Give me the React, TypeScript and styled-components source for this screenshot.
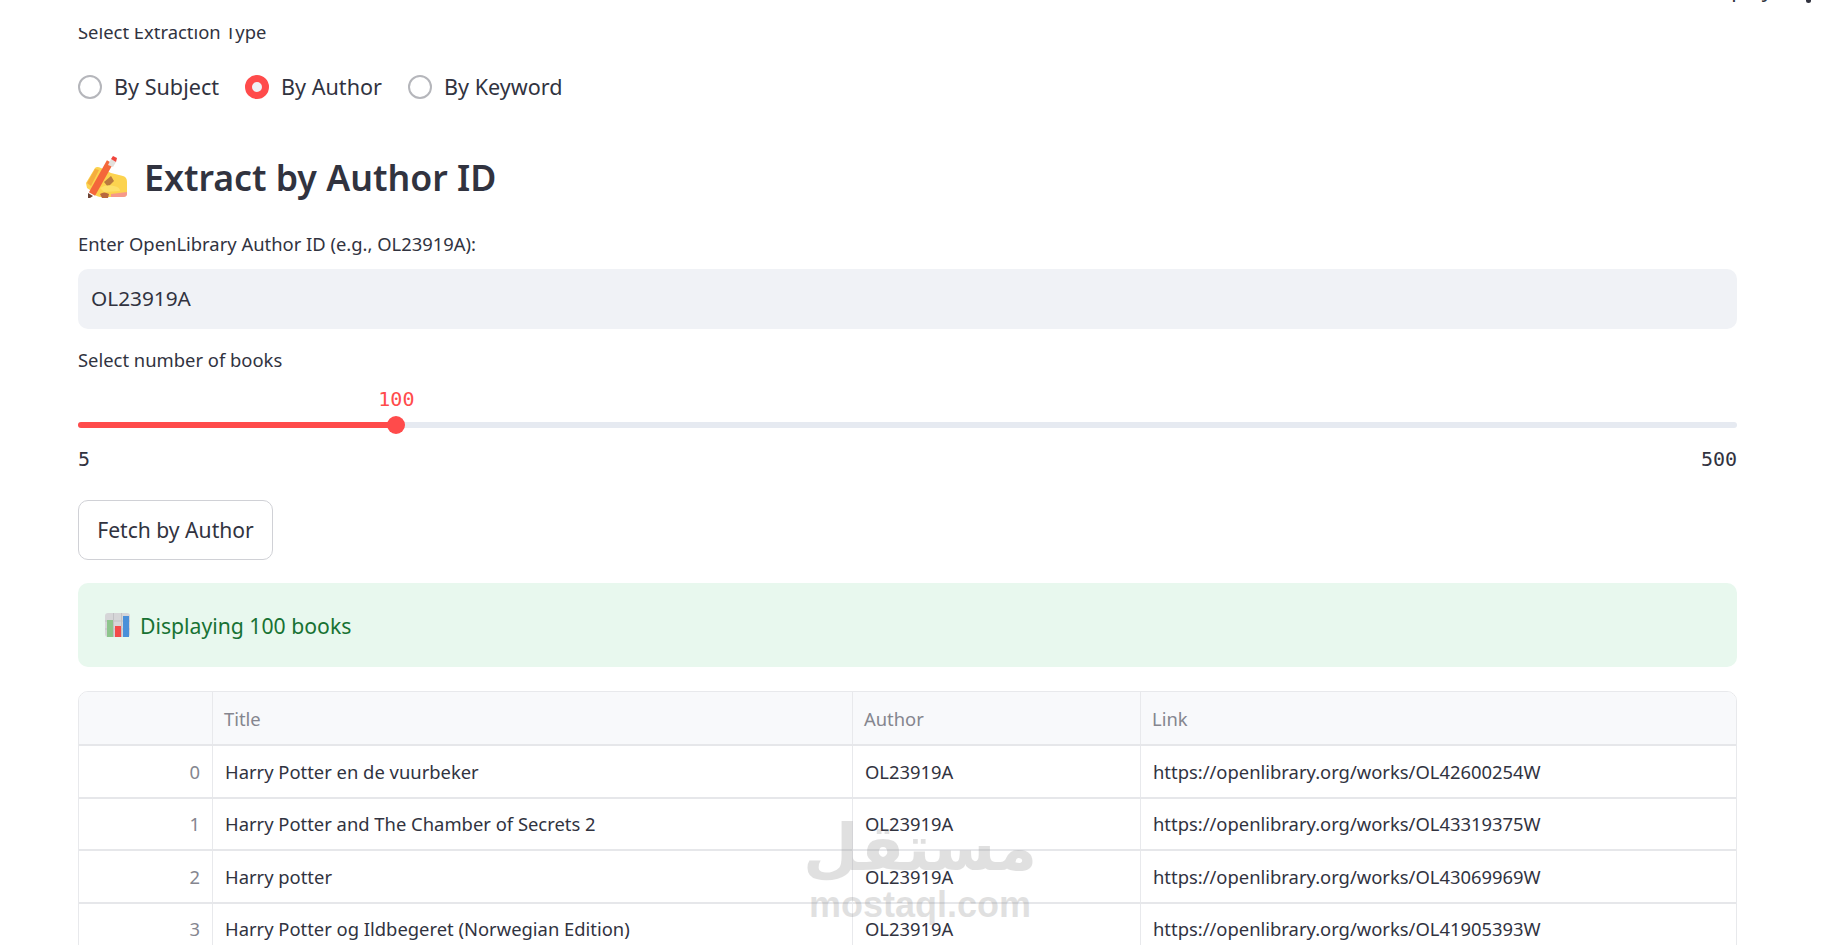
import React from 'react'
import styled, { createGlobalStyle } from 'styled-components'

const SANS = `"Noto Sans", "Open Sans", sans-serif`
const MONO = `"DejaVu Sans Mono", "Liberation Mono", monospace`

const books = [
    { title: 'Harry Potter en de vuurbeker', link: 'https://openlibrary.org/works/OL42600254W' },
    { title: 'Harry Potter and The Chamber of Secrets 2', link: 'https://openlibrary.org/works/OL43319375W' },
    { title: 'Harry potter', link: 'https://openlibrary.org/works/OL43069969W' },
    { title: 'Harry Potter og Ildbegeret (Norwegian Edition)', link: 'https://openlibrary.org/works/OL41905393W' },
]

const extractionTypes = ['By Subject', 'By Author', 'By Keyword']
const sliderPercent = ((100 - 5) / (500 - 5)) * 100

const WritingHand = () => (
    <svg width="44" height="42" viewBox="0 0 44 42">
        <path d="M2 27 L11 12 Q13 10 17 12 L27 17 L39 20 Q43 21 43 26 L43 37 Q43 41 39 41 L16 41 Q10 40 9 36 L3 32 Z" fill="#fcd34f" />
        <path d="M3 27 L11 13 L15 14 L7 30 Z" fill="#f5ad3e" />
        <path d="M20 26 L27 20 L30 25 L24 31 Z" fill="#b9793e" />
        <path d="M8 38 L26 6" stroke="#f4673a" strokeWidth="7" />
        <path d="M24 9 L27 3 L32 6 L29 11 Z" fill="#e3e0dc" />
        <path d="M27 3 L29 0 L33 2 L32 6 Z" fill="#f0443c" />
        <path d="M4 37 L9 40 L6 42 L4 42 Z" fill="#6e4436" />
        <path d="M16 32 Q22 28 30 30 Q36 31 36 35 L20 36 Z" fill="#fde06a" />
        <path d="M16 38 Q20 35 25 38 L24 42 L18 42 Z" fill="#b9683e" />
        <path d="M27 38 L43 36 L43 38 Q43 41 39 41 L27 41 Z" fill="#f6998a" />
    </svg>
)

const BarChart = () => (
    <svg width="25" height="24" viewBox="0 0 25 24">
        <rect x="0" y="0" width="25" height="24" rx="3" fill="#d6d6d8" />
        <path d="M8.5 0 V24 M16.5 0 V24 M0 8 H25 M0 16 H25" stroke="#c2c2c5" strokeWidth="1" />
        <rect x="2" y="7" width="6" height="17" fill="#8dc58c" />
        <rect x="10" y="13" width="6" height="11" fill="#f44a4a" />
        <rect x="18" y="3" width="6" height="21" fill="#4a90d9" />
    </svg>
)

export default function App() {
    return (
        <>
            <GlobalStyle />
            <Page>
                <TopBar>
                    <DeployText>Deploy</DeployText>
                    <MenuDot />
                </TopBar>
                <FieldLabel>Select Extraction Type</FieldLabel>
                <RadioRow>
                    {extractionTypes.map((type) => (
                        <RadioOption key={type}>
                            <RadioCircle $checked={type === 'By Author'} />
                            {type}
                        </RadioOption>
                    ))}
                </RadioRow>
                <Heading>
                    <WritingHand />
                    Extract by Author ID
                </Heading>
                <FieldLabel>Enter OpenLibrary Author ID (e.g., OL23919A):</FieldLabel>
                <TextInput>OL23919A</TextInput>
                <SliderLabel>Select number of books</SliderLabel>
                <SliderWrap>
                    <SliderValue style={{ left: `${sliderPercent}%` }}>100</SliderValue>
                    <SliderFill style={{ width: `${sliderPercent}%` }} />
                    <SliderThumb style={{ left: `${sliderPercent}%` }} />
                </SliderWrap>
                <SliderBounds>
                    <span>5</span>
                    <span>500</span>
                </SliderBounds>
                <FetchButton>Fetch by Author</FetchButton>
                <SuccessBox>
                    <BarChart />
                    Displaying 100 books
                </SuccessBox>
                <Table>
                    <HeaderRow>
                        <HeaderCell />
                        <HeaderCell>Title</HeaderCell>
                        <HeaderCell>Author</HeaderCell>
                        <HeaderCell>Link</HeaderCell>
                    </HeaderRow>
                    {books.map((book, index) => (
                        <BodyRow key={book.link}>
                            <IndexCell>{index}</IndexCell>
                            <Cell>{book.title}</Cell>
                            <Cell>OL23919A</Cell>
                            <Cell>{book.link}</Cell>
                        </BodyRow>
                    ))}
                </Table>
                <Watermark>
                    <WatermarkArabic>مستقل</WatermarkArabic>
                    <WatermarkLatin>mostaql.com</WatermarkLatin>
                </Watermark>
            </Page>
        </>
    )
}

const GlobalStyle = createGlobalStyle`
    html, body {
        margin: 0;
        background: #ffffff;
    }
`

const Page = styled.div`
    position: relative;
    box-sizing: border-box;
    height: 945px;
    overflow: hidden;
    padding: 20px 105px 0 78px;
    font-family: ${SANS};
    color: #31333f;
`

const TopBar = styled.div`
    position: absolute;
    top: 0;
    left: 0;
    right: 0;
    height: 28px;
    background: #ffffff;
    overflow: hidden;
`

const DeployText = styled.span`
    position: absolute;
    left: 1704px;
    top: -23px;
    font-size: 21px;
    line-height: 24px;
    color: #31333f;
`

const MenuDot = styled.span`
    position: absolute;
    left: 1806px;
    top: -2px;
    width: 5px;
    height: 5px;
    border-radius: 50%;
    background: #31333f;
`

const FieldLabel = styled.div`
    font-size: 18.4px;
    line-height: 24px;
    height: 26px;
`

const RadioRow = styled.div`
    display: flex;
    gap: 26px;
    margin-top: 29px;
    height: 24px;
    margin-bottom: 55px;
`

const RadioOption = styled.div`
    display: flex;
    align-items: center;
    gap: 12px;
    font-size: 21.6px;
    line-height: 24px;
`

const RadioCircle = styled.span<{ $checked: boolean }>`
    box-sizing: border-box;
    width: 24px;
    height: 24px;
    border-radius: 50%;
    border: ${(p) => (p.$checked ? '7px solid #ff4b4b' : '2px solid #b5b6bb')};
    background: ${(p) => (p.$checked ? '#f0f2f6' : '#ffffff')};
`

const Heading = styled.h2`
    display: flex;
    align-items: center;
    gap: 16px;
    margin: 0 0 32px;
    padding-left: 6px;
    height: 46px;
    font-size: 35.7px;
    font-weight: 600;
    line-height: 46px;
`

const TextInput = styled.div`
    box-sizing: border-box;
    display: flex;
    align-items: center;
    height: 60px;
    margin-top: 11px;
    padding: 0 13px 2px;
    background: #f0f2f6;
    border-radius: 10px;
    font-size: 20.8px;
`

const SliderLabel = styled(FieldLabel)`
    margin-top: 19px;
`

const SliderWrap = styled.div`
    position: relative;
    height: 6px;
    margin-top: 48px;
    background: #e6eaf1;
    border-radius: 3px;
`

const SliderFill = styled.div`
    height: 100%;
    background: #ff4b4b;
    border-radius: 3px;
`

const SliderThumb = styled.div`
    position: absolute;
    top: -6px;
    width: 18px;
    height: 18px;
    margin-left: -9px;
    border-radius: 50%;
    background: #ff4b4b;
`

const SliderValue = styled.div`
    position: absolute;
    top: -35px;
    transform: translateX(-50%);
    font-family: ${MONO};
    font-size: 20px;
    line-height: 24px;
    color: #ff4b4b;
`

const SliderBounds = styled.div`
    display: flex;
    justify-content: space-between;
    margin-top: 19px;
    font-family: ${MONO};
    font-size: 20px;
    line-height: 24px;
`

const FetchButton = styled.button`
    display: block;
    box-sizing: border-box;
    width: 195px;
    height: 60px;
    margin-top: 29px;
    padding: 0 0 2px;
    background: #ffffff;
    border: 1px solid #d0d1d6;
    border-radius: 10px;
    font-family: ${SANS};
    font-size: 21.1px;
    color: #31333f;
`

const SuccessBox = styled.div`
    display: flex;
    align-items: center;
    gap: 10px;
    box-sizing: border-box;
    height: 84px;
    margin-top: 23px;
    padding-left: 27px;
    background: #e8f8ee;
    border-radius: 10px;
    font-size: 21.2px;
    color: #177233;
`

const Table = styled.div`
    margin-top: 24px;
    border: 1px solid #e8e9ec;
    border-radius: 10px;
    overflow: hidden;
`

const HeaderRow = styled.div`
    display: grid;
    grid-template-columns: 134px 640px 288px 1fr;
    height: 54px;
    background: #f8f9fb;
    border-bottom: 2px solid #e6e7ea;
    box-sizing: border-box;
`

const BodyRow = styled.div`
    display: grid;
    grid-template-columns: 134px 640px 288px 1fr;
    height: 52.5px;
    border-bottom: 2px solid #e6e7ea;
    box-sizing: border-box;
`

const Cell = styled.div`
    display: flex;
    align-items: center;
    padding: 0 12px;
    border-right: 1px solid #e8e9ec;
    font-size: 18.4px;
    white-space: nowrap;
    &:last-child {
        border-right: 0;
    }
`

const HeaderCell = styled(Cell)`
    color: #85868f;
    padding-left: 11px;
`

const IndexCell = styled(Cell)`
    justify-content: flex-end;
    color: #85868f;
`

const Watermark = styled.div`
    position: absolute;
    left: 808px;
    top: 806px;
    width: 224px;
    display: flex;
    flex-direction: column;
    align-items: center;
    color: #787878;
    opacity: 0.22;
    pointer-events: none;
`

const WatermarkArabic = styled.div`
    font-family: "DejaVu Sans", sans-serif;
    font-weight: 700;
    font-size: 64px;
    line-height: 84px;
    height: 84px;
`

const WatermarkLatin = styled.div`
    font-family: "Liberation Sans", sans-serif;
    font-weight: 700;
    font-size: 36px;
    line-height: 30px;
`
